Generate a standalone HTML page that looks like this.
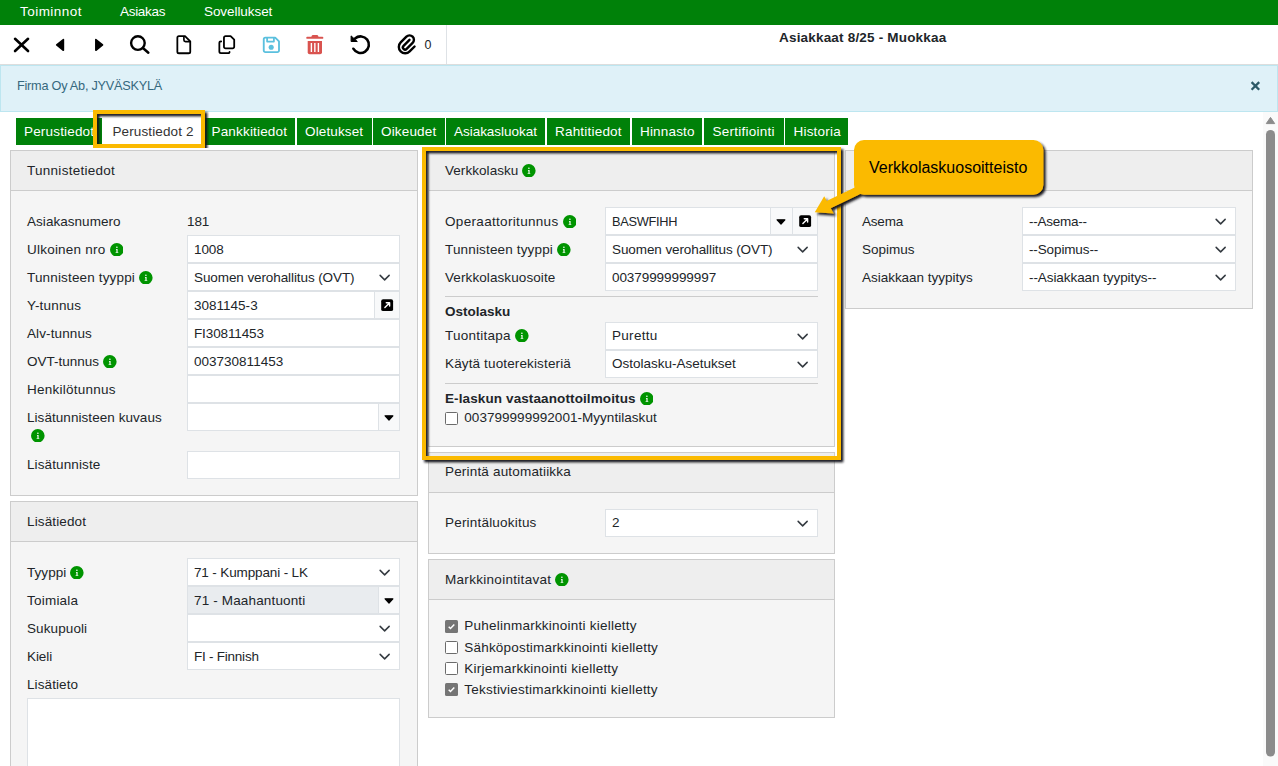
<!DOCTYPE html>
<html lang="fi"><head><meta charset="utf-8"><title>Asiakkaat 8/25 - Muokkaa</title>
<style>
html,body{margin:0;padding:0}
body{width:1278px;height:766px;overflow:hidden;position:relative;background:#fff;font-family:"Liberation Sans",sans-serif;font-size:13.5px;color:#212529}
.a{position:absolute;box-sizing:border-box}
.t{position:absolute;white-space:pre;line-height:28px;height:28px}
.i{vertical-align:-2.3px}
.pn{border:1px solid #ccc;background:#f5f5f5}
.ph{background:#eee;border-bottom:1px solid #ccc;height:40px!important}
.in{border:1px solid #dee2e6}
.ad{background:#f8f9fa}
.tab{position:absolute;top:118px;height:27px;background:#008109}
.hr{position:absolute;height:1px;background:#ccc}
</style></head><body>
<div class="a" style="left:0px;top:0px;width:1278px;height:25px;background:#008109;"></div>
<span class="t" style="left:20px;top:-2px;color:#fff;letter-spacing:0.467px;">Toiminnot</span>
<span class="t" style="left:120px;top:-2px;color:#fff;letter-spacing:-0.301px;">Asiakas</span>
<span class="t" style="left:204px;top:-2px;color:#fff;letter-spacing:-0.072px;">Sovellukset</span>
<div class="a" style="left:0px;top:25px;width:1278px;height:40px;background:#fff;border-bottom:1px solid #ddd;"></div>
<div class="a" style="left:446px;top:25px;width:1px;height:39px;background:#dee2e6;"></div>
<svg class="a" style="left:0;top:25px" width="446" height="39" viewBox="0 25 446 39">
<!-- close -->
<path d="M15.050 38.800L28.050 51M28.050 38.800L15.050 51" stroke="#000" stroke-width="2.600" stroke-linecap="round" fill="none"/>
<!-- prev / next -->
<path d="M63.400 39.500V50.300L56.700 44.900z" fill="#000" stroke="#000" stroke-width="1.600" stroke-linejoin="round"/>
<path d="M95.850 39.500V50.300L102.550 44.900z" fill="#000" stroke="#000" stroke-width="1.600" stroke-linejoin="round"/>
<!-- search -->
<circle cx="137.900" cy="43.050" r="6.800" fill="none" stroke="#000" stroke-width="2.400"/>
<path d="M142.900 48L148.350 52.750" stroke="#000" stroke-width="2.450" stroke-linecap="round"/>
<!-- file -->
<path d="M178.950 36.050H185L190.250 41.300V51.650a1.600 1.600 0 0 1-1.600 1.600H178.950a1.600 1.600 0 0 1-1.600-1.600V37.650a1.600 1.600 0 0 1 1.600-1.600z" fill="none" stroke="#000" stroke-width="1.800" stroke-linejoin="round"/>
<path d="M183.900 36.300V40.100a1.600 1.600 0 0 0 1.600 1.600H190" fill="none" stroke="#000" stroke-width="1.650"/>
<!-- copy -->
<path d="M225.550 36.050H230.600L234.200 39.650V46.850a1.600 1.600 0 0 1-1.600 1.600H225.550a1.600 1.600 0 0 1-1.600-1.600V37.650a1.600 1.600 0 0 1 1.600-1.600z" fill="none" stroke="#000" stroke-width="1.800" stroke-linejoin="round"/>
<path d="M221.200 41.400h-.250a1.600 1.600 0 0 0-1.600 1.600v8.500a1.600 1.600 0 0 0 1.600 1.600h7.400a1.200 1.200 0 0 0 1.200-1.200" fill="none" stroke="#000" stroke-width="1.800" stroke-linecap="round"/>
<!-- save -->
<path d="M265.350 37.600h9.850l3.800 3.800v9.100a1.600 1.600 0 0 1-1.600 1.600h-12.050a1.600 1.600 0 0 1-1.600-1.600v-11.300a1.600 1.600 0 0 1 1.600-1.600z" fill="none" stroke="#5bc0de" stroke-width="1.850" stroke-linejoin="round"/>
<path d="M267.100 37.800v3.800h6.800v-3.800" fill="none" stroke="#5bc0de" stroke-width="1.750" stroke-linejoin="round"/>
<circle cx="271.200" cy="47.200" r="2.550" fill="#5bc0de"/>
<!-- trash -->
<path d="M311.300 36.900l.6-1.400q.3-.6.900-.6h4.300q.6 0 .9.600l.5 1.400z" fill="#d9534f"/>
<rect x="306.300" y="36.700" width="17" height="2.150" rx=".9" fill="#d9534f"/>
<path d="M307.700 40.900h14.300v11.300a2 2 0 0 1-2 2h-10.300a2 2 0 0 1-2-2z" fill="#d9534f"/>
<path d="M311.400 43.100v8.800M314.850 43.100v8.800M318.400 43.100v8.800" stroke="#fff" stroke-width="1.400"/>
<!-- undo -->
<path d="M355.100 38.450A8.300 8.300 0 1 1 353.340 48.720" fill="none" stroke="#000" stroke-width="2.550" stroke-linecap="round"/>
<path d="M351.100 35.900V41.500H357.300z" fill="#000" stroke="#000" stroke-width="1" stroke-linejoin="round"/>
<!-- paperclip -->
<g transform="translate(406.300 44.600) rotate(45)" fill="none" stroke="#000" stroke-width="2.400" stroke-linecap="round">
<path d="M-1.100 -5.600V2.800A2.200 2.200 0 0 0 3.300 2.800V-5.650A4.400 4.400 0 0 0 -5.500 -5.650V2.450A6.350 6.350 0 0 0 7.200 2.450V-4.500"/>
</g>
</svg>
<span class="t" style="left:424.5px;top:31px;font-size:12.46px;letter-spacing:-0.062px;">0</span>
<span class="t" style="left:779px;top:24px;font-weight:700;letter-spacing:0.189px;">Asiakkaat 8/25 - Muokkaa</span>
<div class="a" style="left:0px;top:65px;width:1278px;height:47px;background:#dff1f8;border:1px solid #bde6f0;"></div>
<span class="t" style="left:17px;top:72px;font-size:12.7px;color:#35687e;letter-spacing:-0.238px;">Firma Oy Ab, JYVÄSKYLÄ</span>
<svg class="a" style="left:1250px;top:80px" width="11" height="11" viewBox="0 0 11 11"><path d="M1.6 2.1l7.6 7.6M9.2 2.1L1.6 9.7" stroke="#2c5967" stroke-width="2.3" fill="none"/></svg>
<div class="tab" style="left:16px;width:86px;"></div>
<span class="t" style="left:24px;top:118px;color:#fff;letter-spacing:0.176px;">Perustiedot</span>
<div class="tab" style="left:102px;width:100px;background:#fff;"></div>
<span class="t" style="left:112.5px;top:118px;color:#333;letter-spacing:0.114px;">Perustiedot 2</span>
<div class="tab" style="left:203px;width:92px;"></div>
<span class="t" style="left:211.5px;top:118px;color:#fff;letter-spacing:0.171px;">Pankkitiedot</span>
<div class="tab" style="left:297px;width:74.5px;"></div>
<span class="t" style="left:305px;top:118px;color:#fff;letter-spacing:0.137px;">Oletukset</span>
<div class="tab" style="left:373px;width:71.5px;"></div>
<span class="t" style="left:381px;top:118px;color:#fff;letter-spacing:0.168px;">Oikeudet</span>
<div class="tab" style="left:446px;width:99px;"></div>
<span class="t" style="left:454px;top:118px;color:#fff;letter-spacing:-0.028px;">Asiakasluokat</span>
<div class="tab" style="left:546.5px;width:83.5px;"></div>
<span class="t" style="left:555px;top:118px;color:#fff;letter-spacing:0.202px;">Rahtitiedot</span>
<div class="tab" style="left:632px;width:70px;"></div>
<span class="t" style="left:640px;top:118px;color:#fff;letter-spacing:0.174px;">Hinnasto</span>
<div class="tab" style="left:704px;width:79.5px;"></div>
<span class="t" style="left:712.5px;top:118px;color:#fff;letter-spacing:0.253px;">Sertifiointi</span>
<div class="tab" style="left:785px;width:63px;"></div>
<span class="t" style="left:793.5px;top:118px;color:#fff;letter-spacing:0.197px;">Historia</span>
<div class="a pn" style="left:10px;top:150px;width:408px;height:346px;"></div>
<div class="a ph" style="left:11px;top:151px;width:406px;height:39px;"></div>
<span class="t" style="left:27px;top:157px;letter-spacing:0.272px;">Tunnistetiedot</span>
<span class="t" style="left:27px;top:208px;letter-spacing:0.042px;">Asiakasnumero</span>
<span class="t" style="left:187px;top:208px;letter-spacing:-0.073px;">181</span>
<span class="t" style="left:27px;top:236px;letter-spacing:0.219px;">Ulkoinen nro<svg class="i" style="margin-left:4.1px" width="13.6" height="13.6" viewBox="0 0 13 13"><circle cx="6.5" cy="6.5" r="6.5" fill="#009400"/><circle cx="6.600" cy="4.150" r=".750" fill="#fff"/><path d="M5.700 5.650h1.550v2.900h.650v.850H5.400v-.850h.750V6.500h-.450z" fill="#fff"/></svg></span>
<div class="a in" style="left:187px;top:235px;width:213px;height:28px;background:#fff;"></div>
<span class="t" style="left:194px;top:236px;letter-spacing:-0.078px;">1008</span>
<span class="t" style="left:27px;top:264px;letter-spacing:0.158px;">Tunnisteen tyyppi<svg class="i" style="margin-left:4.1px" width="13.6" height="13.6" viewBox="0 0 13 13"><circle cx="6.5" cy="6.5" r="6.5" fill="#009400"/><circle cx="6.600" cy="4.150" r=".750" fill="#fff"/><path d="M5.700 5.650h1.550v2.900h.650v.850H5.400v-.850h.750V6.500h-.450z" fill="#fff"/></svg></span>
<div class="a in" style="left:187px;top:263px;width:213px;height:28px;background:#fff;"></div>
<span class="t" style="left:194px;top:264px;letter-spacing:-0.094px;">Suomen verohallitus (OVT)</span>
<svg class="a" style="left:377.95px;top:273.5px" width="12" height="8" viewBox="0 0 12 8"><path d="M2.150 1.350l4.500 4.500 4.500-4.500" fill="none" stroke="#343a40" stroke-width="1.500" stroke-linecap="round" stroke-linejoin="round"/></svg>
<span class="t" style="left:27px;top:292px;letter-spacing:0.172px;">Y-tunnus</span>
<div class="a in" style="left:187px;top:291px;width:188px;height:28px;background:#fff;"></div>
<span class="t" style="left:194px;top:292px;letter-spacing:0.01px;">3081145-3</span>
<div class="a in ad" style="left:374px;top:291px;width:26px;height:28px;"></div>
<svg class="a" style="left:381px;top:299px" width="13" height="13" viewBox="0 0 13 13"><rect x=".2" y=".3" width="11.900" height="11.800" rx="1.900" fill="#000"/><path d="M5.300 3.700h3.300v3.300M8.400 3.900L3.900 8.400" fill="none" stroke="#fff" stroke-width="1.450" stroke-linecap="round" stroke-linejoin="round"/></svg>
<span class="t" style="left:27px;top:320px;letter-spacing:0.111px;">Alv-tunnus</span>
<div class="a in" style="left:187px;top:319px;width:213px;height:28px;background:#fff;"></div>
<span class="t" style="left:194px;top:320px;letter-spacing:-0.125px;">FI30811453</span>
<span class="t" style="left:27px;top:348px;letter-spacing:-0.011px;">OVT-tunnus<svg class="i" style="margin-left:4.1px" width="13.6" height="13.6" viewBox="0 0 13 13"><circle cx="6.5" cy="6.5" r="6.5" fill="#009400"/><circle cx="6.600" cy="4.150" r=".750" fill="#fff"/><path d="M5.700 5.650h1.550v2.900h.650v.850H5.400v-.850h.750V6.500h-.450z" fill="#fff"/></svg></span>
<div class="a in" style="left:187px;top:347px;width:213px;height:28px;background:#fff;"></div>
<span class="t" style="left:194px;top:348px;letter-spacing:0.008px;">003730811453</span>
<span class="t" style="left:27px;top:376px;letter-spacing:0.249px;">Henkilötunnus</span>
<div class="a in" style="left:187px;top:375px;width:213px;height:28px;background:#fff;"></div>
<span class="t" style="left:27px;top:404px;letter-spacing:0.057px;">Lisätunnisteen kuvaus</span>
<div class="a in" style="left:187px;top:403px;width:192px;height:28px;background:#fff;"></div>
<div class="a in ad" style="left:378px;top:403px;width:22px;height:28px;"></div>
<svg class="a" style="left:383.8px;top:415.1px" width="10" height="6" viewBox="0 0 10 6"><path d="M1.100 .8h7.800L5 5.100z" fill="#000" stroke="#000" stroke-width="1.200" stroke-linejoin="round"/></svg>
<span class="t" style="left:27px;top:422px"><svg class="i" style="margin-left:4.4px" width="13.6" height="13.6" viewBox="0 0 13 13"><circle cx="6.5" cy="6.5" r="6.5" fill="#009400"/><circle cx="6.600" cy="4.150" r=".750" fill="#fff"/><path d="M5.700 5.650h1.550v2.900h.650v.850H5.400v-.850h.750V6.500h-.450z" fill="#fff"/></svg></span>
<span class="t" style="left:27px;top:451px;letter-spacing:0.116px;">Lisätunniste</span>
<div class="a in" style="left:187px;top:451px;width:213px;height:28px;background:#fff;"></div>
<div class="a pn" style="left:10px;top:501px;width:408px;height:300px;"></div>
<div class="a ph" style="left:11px;top:502px;width:406px;height:39px;"></div>
<span class="t" style="left:27px;top:508px;letter-spacing:0.131px;">Lisätiedot</span>
<span class="t" style="left:27px;top:559px;letter-spacing:0.057px;">Tyyppi<svg class="i" style="margin-left:4.1px" width="13.6" height="13.6" viewBox="0 0 13 13"><circle cx="6.5" cy="6.5" r="6.5" fill="#009400"/><circle cx="6.600" cy="4.150" r=".750" fill="#fff"/><path d="M5.700 5.650h1.550v2.900h.650v.850H5.400v-.850h.750V6.500h-.450z" fill="#fff"/></svg></span>
<div class="a in" style="left:187px;top:558px;width:213px;height:28px;background:#fff;"></div>
<span class="t" style="left:194px;top:559px;letter-spacing:-0.137px;">71 - Kumppani - LK</span>
<svg class="a" style="left:377.95px;top:568.5px" width="12" height="8" viewBox="0 0 12 8"><path d="M2.150 1.350l4.500 4.500 4.500-4.500" fill="none" stroke="#343a40" stroke-width="1.500" stroke-linecap="round" stroke-linejoin="round"/></svg>
<span class="t" style="left:27px;top:587px;letter-spacing:0.223px;">Toimiala</span>
<div class="a in" style="left:187px;top:586px;width:192px;height:28px;background:#e9ecef;"></div>
<span class="t" style="left:194px;top:587px;letter-spacing:0.153px;">71 - Maahantuonti</span>
<div class="a in ad" style="left:378px;top:586px;width:22px;height:28px;"></div>
<svg class="a" style="left:383.8px;top:598.1px" width="10" height="6" viewBox="0 0 10 6"><path d="M1.100 .8h7.800L5 5.100z" fill="#000" stroke="#000" stroke-width="1.200" stroke-linejoin="round"/></svg>
<span class="t" style="left:27px;top:615px;letter-spacing:0.102px;">Sukupuoli</span>
<div class="a in" style="left:187px;top:614px;width:213px;height:28px;background:#fff;"></div>
<svg class="a" style="left:377.95px;top:624.5px" width="12" height="8" viewBox="0 0 12 8"><path d="M2.150 1.350l4.500 4.500 4.500-4.500" fill="none" stroke="#343a40" stroke-width="1.500" stroke-linecap="round" stroke-linejoin="round"/></svg>
<span class="t" style="left:27px;top:643px;letter-spacing:-0.081px;">Kieli</span>
<div class="a in" style="left:187px;top:642px;width:213px;height:28px;background:#fff;"></div>
<span class="t" style="left:194px;top:643px;letter-spacing:-0.237px;">FI - Finnish</span>
<svg class="a" style="left:377.95px;top:652.5px" width="12" height="8" viewBox="0 0 12 8"><path d="M2.150 1.350l4.500 4.500 4.500-4.500" fill="none" stroke="#343a40" stroke-width="1.500" stroke-linecap="round" stroke-linejoin="round"/></svg>
<span class="t" style="left:27px;top:671px;letter-spacing:0.095px;">Lisätieto</span>
<div class="a in" style="left:27px;top:698px;width:373px;height:100px;background:#fff;"></div>
<div class="a pn" style="left:428px;top:150px;width:407px;height:297px;"></div>
<div class="a ph" style="left:429px;top:151px;width:405px;height:39px;"></div>
<span class="t" style="left:445px;top:157px;letter-spacing:0.051px;">Verkkolasku<svg class="i" style="margin-left:4.1px" width="13.6" height="13.6" viewBox="0 0 13 13"><circle cx="6.5" cy="6.5" r="6.5" fill="#009400"/><circle cx="6.600" cy="4.150" r=".750" fill="#fff"/><path d="M5.700 5.650h1.550v2.900h.650v.850H5.400v-.850h.750V6.500h-.450z" fill="#fff"/></svg></span>
<span class="t" style="left:445px;top:208px;letter-spacing:0.321px;">Operaattoritunnus<svg class="i" style="margin-left:4.1px" width="13.6" height="13.6" viewBox="0 0 13 13"><circle cx="6.5" cy="6.5" r="6.5" fill="#009400"/><circle cx="6.600" cy="4.150" r=".750" fill="#fff"/><path d="M5.700 5.650h1.550v2.900h.650v.850H5.400v-.850h.750V6.500h-.450z" fill="#fff"/></svg></span>
<div class="a in" style="left:605px;top:207px;width:166px;height:28px;background:#fff;"></div>
<span class="t" style="left:612px;top:208px;font-size:12.8px;letter-spacing:-0.285px;">BASWFIHH</span>
<div class="a in ad" style="left:770px;top:207px;width:23px;height:28px;"></div>
<svg class="a" style="left:776.3px;top:219.1px" width="10" height="6" viewBox="0 0 10 6"><path d="M1.100 .8h7.800L5 5.100z" fill="#000" stroke="#000" stroke-width="1.200" stroke-linejoin="round"/></svg>
<div class="a in ad" style="left:792px;top:207px;width:26px;height:28px;"></div>
<svg class="a" style="left:799px;top:215px" width="13" height="13" viewBox="0 0 13 13"><rect x=".2" y=".3" width="11.900" height="11.800" rx="1.900" fill="#000"/><path d="M5.300 3.700h3.300v3.300M8.400 3.900L3.900 8.400" fill="none" stroke="#fff" stroke-width="1.450" stroke-linecap="round" stroke-linejoin="round"/></svg>
<span class="t" style="left:445px;top:236px;letter-spacing:0.158px;">Tunnisteen tyyppi<svg class="i" style="margin-left:4.1px" width="13.6" height="13.6" viewBox="0 0 13 13"><circle cx="6.5" cy="6.5" r="6.5" fill="#009400"/><circle cx="6.600" cy="4.150" r=".750" fill="#fff"/><path d="M5.700 5.650h1.550v2.900h.650v.850H5.400v-.850h.750V6.500h-.450z" fill="#fff"/></svg></span>
<div class="a in" style="left:605px;top:235px;width:213px;height:28px;background:#fff;"></div>
<span class="t" style="left:612px;top:236px;letter-spacing:-0.094px;">Suomen verohallitus (OVT)</span>
<svg class="a" style="left:795.95px;top:245.5px" width="12" height="8" viewBox="0 0 12 8"><path d="M2.150 1.350l4.500 4.500 4.500-4.500" fill="none" stroke="#343a40" stroke-width="1.500" stroke-linecap="round" stroke-linejoin="round"/></svg>
<span class="t" style="left:445px;top:264px;letter-spacing:0.094px;">Verkkolaskuosoite</span>
<div class="a in" style="left:605px;top:263px;width:213px;height:28px;background:#fff;"></div>
<span class="t" style="left:612px;top:264px;letter-spacing:-0.075px;">00379999999997</span>
<div class="hr" style="left:445px;top:296px;width:373px"></div>
<span class="t" style="left:445px;top:298px;font-weight:700;letter-spacing:0.012px;">Ostolasku</span>
<span class="t" style="left:445px;top:322px;letter-spacing:0.259px;">Tuontitapa<svg class="i" style="margin-left:4.1px" width="13.6" height="13.6" viewBox="0 0 13 13"><circle cx="6.5" cy="6.5" r="6.5" fill="#009400"/><circle cx="6.600" cy="4.150" r=".750" fill="#fff"/><path d="M5.700 5.650h1.550v2.900h.650v.850H5.400v-.850h.750V6.500h-.450z" fill="#fff"/></svg></span>
<div class="a in" style="left:605px;top:322px;width:213px;height:28px;background:#fff;"></div>
<span class="t" style="left:612px;top:322px;letter-spacing:0.304px;">Purettu</span>
<svg class="a" style="left:795.95px;top:332.5px" width="12" height="8" viewBox="0 0 12 8"><path d="M2.150 1.350l4.500 4.500 4.500-4.500" fill="none" stroke="#343a40" stroke-width="1.500" stroke-linecap="round" stroke-linejoin="round"/></svg>
<span class="t" style="left:445px;top:350px;letter-spacing:0.138px;">Käytä tuoterekisteriä</span>
<div class="a in" style="left:605px;top:350px;width:213px;height:28px;background:#fff;"></div>
<span class="t" style="left:612px;top:350px;letter-spacing:-0.004px;">Ostolasku-Asetukset</span>
<svg class="a" style="left:795.95px;top:360.5px" width="12" height="8" viewBox="0 0 12 8"><path d="M2.150 1.350l4.500 4.500 4.500-4.500" fill="none" stroke="#343a40" stroke-width="1.500" stroke-linecap="round" stroke-linejoin="round"/></svg>
<div class="hr" style="left:445px;top:383px;width:373px"></div>
<span class="t" style="left:445px;top:385px;font-weight:700;letter-spacing:0.11px;">E-laskun vastaanottoilmoitus<svg class="i" style="margin-left:4.1px" width="13.6" height="13.6" viewBox="0 0 13 13"><circle cx="6.5" cy="6.5" r="6.5" fill="#009400"/><circle cx="6.600" cy="4.150" r=".750" fill="#fff"/><path d="M5.700 5.650h1.550v2.900h.650v.850H5.400v-.850h.750V6.500h-.450z" fill="#fff"/></svg></span>
<div class="a" style="left:445px;top:412px;width:13px;height:13px;box-sizing:border-box;border:1px solid #6b6b6b;border-radius:1.5px;background:#fff;"></div>
<span class="t" style="left:464.3px;top:404px;letter-spacing:0.037px;">003799999992001-Myyntilaskut</span>
<div class="a pn" style="left:428px;top:452px;width:407px;height:102px;"></div>
<div class="a ph" style="left:429px;top:453px;width:405px;height:39px;"></div>
<span class="t" style="left:445px;top:458px;letter-spacing:0.18px;">Perintä automatiikka</span>
<span class="t" style="left:445px;top:509px;letter-spacing:0.199px;">Perintäluokitus</span>
<div class="a in" style="left:605px;top:509px;width:213px;height:28px;background:#fff;"></div>
<span class="t" style="left:612px;top:509px;letter-spacing:-0.078px;">2</span>
<svg class="a" style="left:795.95px;top:519.5px" width="12" height="8" viewBox="0 0 12 8"><path d="M2.150 1.350l4.500 4.500 4.500-4.500" fill="none" stroke="#343a40" stroke-width="1.500" stroke-linecap="round" stroke-linejoin="round"/></svg>
<div class="a pn" style="left:428px;top:559px;width:407px;height:159px;"></div>
<div class="a ph" style="left:429px;top:560px;width:405px;height:39px;"></div>
<span class="t" style="left:445px;top:566px;letter-spacing:0.297px;">Markkinointitavat<svg class="i" style="margin-left:4.1px" width="13.6" height="13.6" viewBox="0 0 13 13"><circle cx="6.5" cy="6.5" r="6.5" fill="#009400"/><circle cx="6.600" cy="4.150" r=".750" fill="#fff"/><path d="M5.700 5.650h1.550v2.900h.650v.850H5.400v-.850h.750V6.500h-.450z" fill="#fff"/></svg></span>
<svg class="a" style="left:445px;top:620px" width="13" height="13" viewBox="0 0 13 13"><rect width="13" height="13" rx="1.5" fill="#757575"/><path d="M3.7 6.7l1.8 1.8 3.8-3.9" fill="none" stroke="#fff" stroke-width="1.5" stroke-linecap="butt" stroke-linejoin="miter"/></svg>
<span class="t" style="left:464.3px;top:612px;letter-spacing:0.231px;">Puhelinmarkkinointi kielletty</span>
<div class="a" style="left:445px;top:641px;width:13px;height:13px;box-sizing:border-box;border:1px solid #6b6b6b;border-radius:1.5px;background:#fff;"></div>
<span class="t" style="left:464.3px;top:634px;letter-spacing:0.193px;">Sähköpostimarkkinointi kielletty</span>
<div class="a" style="left:445px;top:662px;width:13px;height:13px;box-sizing:border-box;border:1px solid #6b6b6b;border-radius:1.5px;background:#fff;"></div>
<span class="t" style="left:464.3px;top:655px;letter-spacing:0.231px;">Kirjemarkkinointi kielletty</span>
<svg class="a" style="left:445px;top:683px" width="13" height="13" viewBox="0 0 13 13"><rect width="13" height="13" rx="1.5" fill="#757575"/><path d="M3.7 6.7l1.8 1.8 3.8-3.9" fill="none" stroke="#fff" stroke-width="1.5" stroke-linecap="butt" stroke-linejoin="miter"/></svg>
<span class="t" style="left:464.3px;top:676px;letter-spacing:0.219px;">Tekstiviestimarkkinointi kielletty</span>
<div class="a pn" style="left:845px;top:150px;width:408px;height:159px;"></div>
<div class="a ph" style="left:846px;top:151px;width:406px;height:39px;"></div>
<span class="t" style="left:862px;top:208px;letter-spacing:-0.209px;">Asema</span>
<div class="a in" style="left:1022px;top:207px;width:214px;height:28px;background:#fff;"></div>
<span class="t" style="left:1029px;top:208px;letter-spacing:-0.253px;">--Asema--</span>
<svg class="a" style="left:1213.95px;top:217.5px" width="12" height="8" viewBox="0 0 12 8"><path d="M2.150 1.350l4.500 4.500 4.500-4.500" fill="none" stroke="#343a40" stroke-width="1.500" stroke-linecap="round" stroke-linejoin="round"/></svg>
<span class="t" style="left:862px;top:236px;letter-spacing:-0.02px;">Sopimus</span>
<div class="a in" style="left:1022px;top:235px;width:214px;height:28px;background:#fff;"></div>
<span class="t" style="left:1029px;top:236px;letter-spacing:-0.126px;">--Sopimus--</span>
<svg class="a" style="left:1213.95px;top:245.5px" width="12" height="8" viewBox="0 0 12 8"><path d="M2.150 1.350l4.500 4.500 4.500-4.500" fill="none" stroke="#343a40" stroke-width="1.500" stroke-linecap="round" stroke-linejoin="round"/></svg>
<span class="t" style="left:862px;top:264px;letter-spacing:-0.023px;">Asiakkaan tyypitys</span>
<div class="a in" style="left:1022px;top:263px;width:214px;height:28px;background:#fff;"></div>
<span class="t" style="left:1029px;top:264px;letter-spacing:-0.076px;">--Asiakkaan tyypitys--</span>
<svg class="a" style="left:1213.95px;top:273.5px" width="12" height="8" viewBox="0 0 12 8"><path d="M2.150 1.350l4.500 4.500 4.500-4.500" fill="none" stroke="#343a40" stroke-width="1.500" stroke-linecap="round" stroke-linejoin="round"/></svg>
<div class="a" style="left:1263px;top:112px;width:15px;height:654px;background:#fafafa;"></div>
<svg class="a" style="left:1263px;top:112px" width="15" height="654" viewBox="0 0 15 654"><path d="M7.5 5.4l4.2 6.2H3.3z" fill="#8b8b8b" stroke="#8b8b8b" stroke-width="1" stroke-linejoin="round"/><rect x="3" y="18" width="9" height="626.5" rx="4.5" fill="#8b8b8b"/></svg>
<svg class="a" style="left:0;top:0;pointer-events:none" width="1278" height="766" viewBox="0 0 1278 766">
<defs><filter id="ds" x="-5%" y="-5%" width="110%" height="110%"><feDropShadow dx="2.300" dy="2.300" stdDeviation="1.250" flood-color="#14161f" flood-opacity="1"/></filter></defs>
<g filter="url(#ds)">
<rect x="95" y="112" width="108" height="34" fill="none" stroke="#fbba04" stroke-width="4"/>
</g>
<g filter="url(#ds)">
<rect x="424" y="149" width="415" height="309" fill="none" stroke="#fbba04" stroke-width="4"/>
</g>
<g filter="url(#ds)">
<path d="M864 140h169.400a10 10 0 0 1 10 10v34.800a10 10 0 0 1-10 10h-169.400a10 10 0 0 1-10-10v-34.800a10 10 0 0 1 10-10z" fill="#fbba04"/>
<path d="M857 191L830.400 203.800" stroke="#fbba04" stroke-width="8.200" stroke-linecap="round"/>
<path d="M814.800 212.200L824.200 196.300L833.700 213.500z" fill="#fbba04"/>
</g>
<text x="869" y="172.800" font-family="Liberation Sans, sans-serif" font-size="16" fill="#000">Verkkolaskuosoitteisto</text>
</svg>
</body></html>
